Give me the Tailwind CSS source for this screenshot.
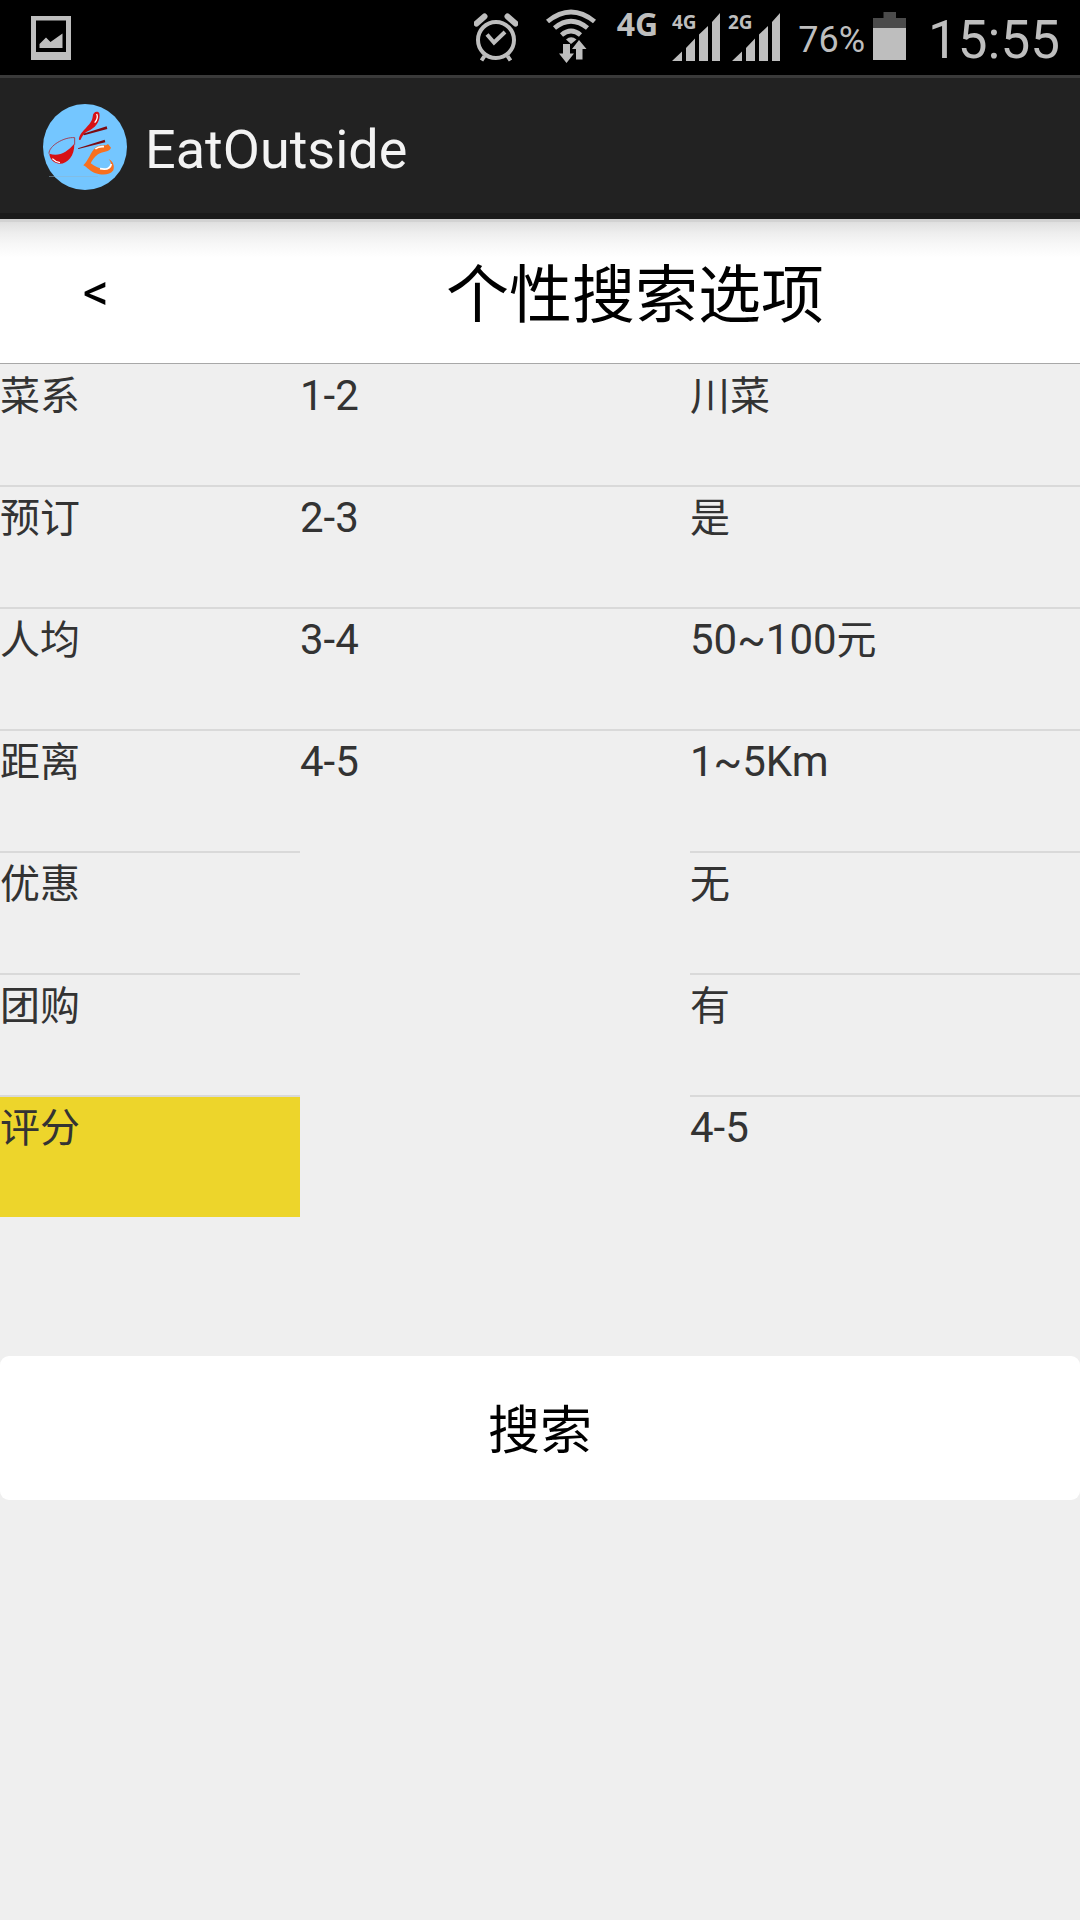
<!DOCTYPE html>
<html lang="zh-CN">
<head>
<meta charset="utf-8">
<meta name="viewport" content="width=device-width, initial-scale=1">
<title>EatOutside</title>
<script src="https://cdn.jsdelivr.net/npm/@tailwindcss/browser@4"></script>
</head>
<body class="min-h-screen bg-[#efefef] font-['Roboto','Noto_Sans_CJK_SC',sans-serif] text-[#333333]">

<!-- Status bar -->
<div class="flex h-[75px] items-center bg-black pr-5 pl-[31px] text-[#bebebe]">
  <svg class="h-[75px] w-10 shrink-0" viewBox="31 0 40 75" fill="currentColor" role="img" aria-label="Picture">
    <path fill-rule="evenodd" d="M31 16H71V60H31ZM36 20.500V52H66V20.500Z"/>
    <path d="M39.500 48V44L46 37.500L50.500 42L62.500 33.500V48Z"/>
  </svg>
  <svg class="ml-auto h-[75px] w-11 shrink-0" viewBox="474 0 44 75" fill="none" stroke="currentColor" role="img" aria-label="Alarm">
    <circle cx="496" cy="40" r="18" stroke-width="4"/>
    <path d="M487 34.500L494 42.500L505 32" stroke-width="4"/>
    <path d="M484.500 56L481.500 60.500M507.500 56L510.500 60.500" stroke-width="4"/>
    <path d="M476.500 23.500L484.500 16.500M515.500 23.500L507.500 16.500" stroke-width="6" stroke-linecap="round"/>
  </svg>
  <svg class="ml-7 h-[75px] w-[51px] shrink-0" viewBox="546 0 51 75" fill="none" stroke="currentColor" role="img" aria-label="Wi-Fi">
    <path d="M547.500 21.500Q571 2.500 594.500 21.500M554.500 28Q571 14.500 587.500 28M561.500 35Q571 27 580.500 35" stroke-width="4.800"/>
    <path d="M566 39.500Q571 35 576.500 39.500L571 44Z" fill="currentColor" stroke="none"/>
    <path d="M563 44H570V53.500H574L566.500 63L559 53.500H563ZM576 59.500V49H572L579 40L586.500 49H582.500V59.500Z" fill="currentColor" stroke="none"/>
  </svg>
  <span class="ml-5 h-[75px] pt-2 font-['Open_Sans'] text-[32px] leading-8 font-bold">4G</span>
  <svg class="ml-[14px] h-[75px] w-12 shrink-0" viewBox="673 0 48 75" fill="currentColor" role="img" aria-label="4G signal">
    <text x="673" y="29" font-family="Open Sans" font-size="19" font-weight="700">4G</text>
    <path d="M673 61L683 51.500V61ZM687 61V48L696 38.500V61ZM700 61V34.500L709 26V61ZM713 61V22L721 13V61Z"/>
  </svg>
  <svg class="ml-2 h-[75px] w-[52px] shrink-0" viewBox="729 0 52 75" fill="currentColor" role="img" aria-label="2G signal">
    <text x="729" y="29" font-family="Open Sans" font-size="19" font-weight="700">2G</text>
    <path d="M733 61L743 51.500V61ZM747 61V48L756 38.500V61ZM760 61V34.500L769 26V61ZM773 61V22L781 13V61Z"/>
  </svg>
  <span class="ml-[18px] pt-1 text-[36px] leading-[42px]">76%</span>
  <svg class="ml-2 h-[75px] w-[33px] shrink-0" viewBox="874 0 33 75" role="img" aria-label="Battery">
    <path fill="#4b4b4b" d="M874 18H884.500V12H897V18H907V28H874Z"/>
    <path fill="#bebebe" d="M874 28H907V60H874Z"/>
  </svg>
  <span class="ml-[22px] pt-1 text-[53px] leading-[60px]">15:55</span>
</div>

<!-- Action bar -->
<header class="flex h-36 items-center border-t-[3px] border-b-[6px] border-t-[#3a3a3a] border-b-[#1a1a1a] bg-[#222222] pt-0.5 pl-[43px]">
  <svg class="h-[88px] w-[84px] shrink-0" viewBox="43 103 84 88" role="img" aria-label="EatOutside logo">
    <ellipse cx="85" cy="147" rx="42" ry="43" fill="#74c6ff"/>
    <path d="M49 176.500H98" stroke="#8eb4cc" stroke-width="1" stroke-opacity="0.500"/>
    <g transform="translate(44 106) scale(0.3333)">
      <path d="M16 143C45 153 70 138 91 113C92 150 70 174 46 173C27 170 17 158 16 143Z" fill="#d71114"/>
      <path d="M15 143C14 120 60 92 92 95V116" fill="none" stroke="#a82838" stroke-width="2.500"/>
      <path d="M25 158Q34 168 48 170" fill="none" stroke="#fff" stroke-width="4"/>
      <path d="M105 102C103 78 144 58 146 32C147 18 160 13 166 22C170 42 158 62 140 71C124 78 116 86 110 101Z" fill="#d71114"/>
      <path d="M158 24Q164 36 152 50" fill="none" stroke="#fff" stroke-width="4"/>
      <path d="M118 83L188 61L190 69L120 88ZM102 127L182 101L184 109L103 129Z" fill="#7c0b12"/>
      <path d="M118 178C134 162 140 138 154 125C168 114 184 122 192 114L201 125C196 139 178 134 162 145C150 154 145 163 140 172C156 184 172 192 190 188C204 183 204 170 194 160C208 166 212 180 208 193C198 208 174 208 155 202C138 197 130 184 118 178Z" fill="#f8701f"/>
      <path d="M154 129Q164 120 180 122M168 188Q198 194 202 174" fill="none" stroke="#fff" stroke-width="5"/>
    </g>
  </svg>
  <h1 class="ml-[18px] pt-1.5 text-[54px] leading-[64px] text-[#f3f3f3]">EatOutside</h1>
</header>

<!-- Page heading, with the action bar's shadow falling on it -->
<div class="grid h-[145px] grid-cols-[190px_1fr] items-stretch border-b border-[#a8a8a8] bg-white bg-[linear-gradient(#d2d2d2_0px,#d2d2d2_3px,#dfdfdf_3px,#eeeeee_14px,#f8f8f8_26px,#ffffff_39px)] text-black">
  <button type="button" aria-label="返回" class="pt-1 pl-0.5 text-[52px] leading-[60px]">&lt;</button>
  <h2 class="self-center pt-2.5 text-center text-[63px] leading-[72px]">个性搜索选项</h2>
</div>

<!-- Criteria, choices, and current values -->
<main>
  <div class="grid grid-cols-[10fr_13fr_13fr] items-start pt-px text-[42px] leading-[50px]">
    <div class="flex flex-col divide-y-2 divide-[#d9d9d9]">
      <button type="button" class="box-content flex h-[114px] items-start pt-1.5"><span><span class="text-[40px] leading-none">菜系</span></span></button>
      <button type="button" class="box-content flex h-[114px] items-start pt-1.5"><span><span class="text-[40px] leading-none">预订</span></span></button>
      <button type="button" class="box-content flex h-[114px] items-start pt-1.5"><span><span class="text-[40px] leading-none">人均</span></span></button>
      <button type="button" class="box-content flex h-[114px] items-start pt-1.5"><span><span class="text-[40px] leading-none">距离</span></span></button>
      <button type="button" class="box-content flex h-[114px] items-start pt-1.5"><span><span class="text-[40px] leading-none">优惠</span></span></button>
      <button type="button" class="box-content flex h-[114px] items-start pt-1.5"><span><span class="text-[40px] leading-none">团购</span></span></button>
      <button type="button" aria-pressed="true" class="box-content flex h-[114px] items-start bg-[#edd52b] pt-1.5"><span><span class="text-[40px] leading-none">评分</span></span></button>
    </div>
    <div class="flex flex-col divide-y-2 divide-[#d9d9d9]">
      <button type="button" class="box-content flex h-[114px] items-start pt-1.5">1-2</button>
      <button type="button" class="box-content flex h-[114px] items-start pt-1.5">2-3</button>
      <button type="button" class="box-content flex h-[114px] items-start pt-1.5">3-4</button>
      <button type="button" class="box-content flex h-[114px] items-start pt-1.5">4-5</button>
    </div>
    <ul class="divide-y-2 divide-[#d9d9d9]">
      <li class="box-content h-[114px] pt-1.5"><span class="text-[40px] leading-none">川菜</span></li>
      <li class="box-content h-[114px] pt-1.5"><span class="text-[40px] leading-none">是</span></li>
      <li class="box-content h-[114px] pt-1.5">50~100<span class="text-[40px] leading-none">元</span></li>
      <li class="box-content h-[114px] pt-1.5">1~5Km</li>
      <li class="box-content h-[114px] pt-1.5"><span class="text-[40px] leading-none">无</span></li>
      <li class="box-content h-[114px] pt-1.5"><span class="text-[40px] leading-none">有</span></li>
      <li class="box-content h-[114px] pt-1.5">4-5</li>
    </ul>
  </div>
  <button type="button" class="mt-[139px] block h-36 w-full rounded-[9px] bg-white pt-2 text-[52px] leading-[60px] text-black">搜索</button>
</main>
</body>
</html>
